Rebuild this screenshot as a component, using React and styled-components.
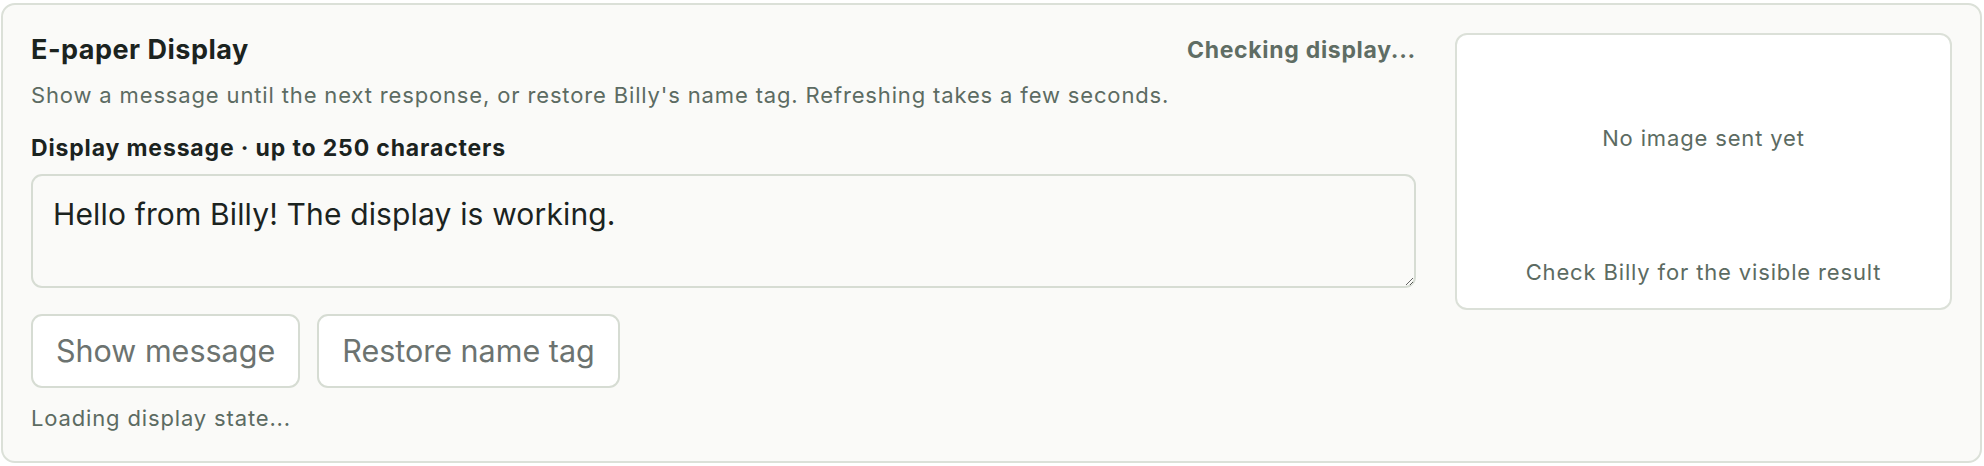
import styled, { createGlobalStyle } from "styled-components";

const GlobalStyle = createGlobalStyle`
  html, body {
    margin: 0;
    padding: 0;
    background: #ffffff;
  }
  body {
    font-family: Inter, "Noto Sans", "Liberation Sans", sans-serif;
    -webkit-font-smoothing: antialiased;
  }
  #root {
    padding: 3px 2px 4px 1px;
  }
`;

const Card = styled.section`
  display: grid;
  grid-template-columns: minmax(0, 1fr) 497px;
  column-gap: 39px;
  align-items: start;
  padding: 28px 28px 29px 28px;
  background: #fafaf8;
  border: 2px solid #dbe0d8;
  border-radius: 14px;
`;

const Main = styled.div`
  display: flex;
  flex-direction: column;
`;

const Header = styled.div`
  display: flex;
  align-items: center;
  justify-content: space-between;
`;

const Title = styled.h2`
  margin: 0;
  font-size: 27px;
  line-height: 34px;
  font-weight: 700;
  letter-spacing: 0.5px;
  color: #1b231f;
`;

const Status = styled.span`
  font-size: 23px;
  line-height: 30px;
  font-weight: 700;
  letter-spacing: 0.7px;
  color: #5f6d64;
`;

const Muted = styled.p`
  margin: ${(p) => p.$top || 0}px 0 0;
  font-size: 22px;
  line-height: 28px;
  letter-spacing: 0.85px;
  color: #5c6b62;
`;

const Label = styled.label`
  margin-top: 25px;
  font-size: 23px;
  line-height: 28px;
  font-weight: 700;
  letter-spacing: 0.85px;
  color: #1b231f;
`;

const MessageInput = styled.textarea`
  box-sizing: border-box;
  margin-top: 12px;
  width: 100%;
  height: 114px;
  padding: 20px 20px 18px;
  font-family: inherit;
  font-size: 30px;
  line-height: 36px;
  letter-spacing: 0.15px;
  color: #1b231f;
  background: #fafaf8;
  border: 2px solid #d6dcd3;
  border-radius: 11px;
  outline: none;
  resize: vertical;
`;

const Actions = styled.div`
  display: flex;
  gap: 17px;
  margin-top: 26px;
`;

const Button = styled.button`
  box-sizing: border-box;
  height: 74px;
  padding: 0 23px;
  font-family: inherit;
  font-size: 30.5px;
  line-height: 40px;
  color: #6c7370;
  background: #ffffff;
  border: 2px solid #d6dcd3;
  border-radius: 11px;
  cursor: pointer;
`;

const Preview = styled.div`
  box-sizing: border-box;
  display: flex;
  flex-direction: column;
  gap: 20px;
  height: 277px;
  padding: 2px 16px 22px;
  background: #ffffff;
  border: 2px solid #dbe0d8;
  border-radius: 12px;
  color: #5c6b62;
  font-size: 22px;
  line-height: 28px;
  letter-spacing: 0.85px;
  text-align: center;
`;

const Placeholder = styled.div`
  flex: 1;
  display: flex;
  align-items: center;
  justify-content: center;
`;

export default function App() {
  return (
    <>
      <GlobalStyle />
      <Card>
        <Main>
          <Header>
            <Title>E-paper Display</Title>
            <Status>Checking display...</Status>
          </Header>
          <Muted $top={14}>
            Show a message until the next response, or restore Billy's name tag. Refreshing takes a few seconds.
          </Muted>
          <Label htmlFor="display-message">Display message · up to 250 characters</Label>
          <MessageInput
            id="display-message"
            maxLength={250}
            defaultValue="Hello from Billy! The display is working."
          />
          <Actions>
            <Button type="button">Show message</Button>
            <Button type="button">Restore name tag</Button>
          </Actions>
          <Muted $top={16}>Loading display state...</Muted>
        </Main>
        <Preview>
          <Placeholder>No image sent yet</Placeholder>
          <div>Check Billy for the visible result</div>
        </Preview>
      </Card>
    </>
  );
}
